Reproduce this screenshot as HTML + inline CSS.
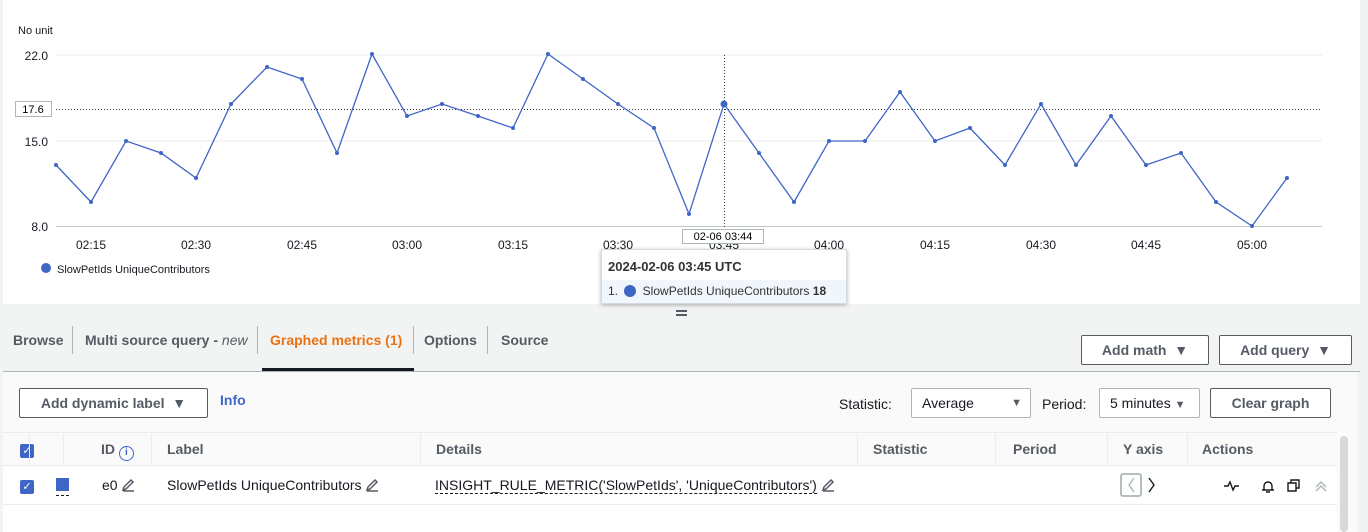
<!DOCTYPE html>
<html><head><meta charset="utf-8"><style>
*{box-sizing:border-box;margin:0;padding:0}
body{width:1368px;height:532px;overflow:hidden;background:#f2f3f3;font-family:"Liberation Sans",sans-serif;color:#16191f;position:relative}
.abs{position:absolute}
.chart{left:3px;top:0;width:1357px;height:304px;background:#fff}
.tab{position:absolute;top:332px;font-size:14px;font-weight:bold;color:#545b64}
.sep{position:absolute;top:326px;width:1px;height:28px;background:#aab7b8}
.btn{position:absolute;border:1px solid #545b64;border-radius:2px;background:#fff;font-size:14px;font-weight:bold;color:#545b64;text-align:center;line-height:28px;height:30px}
.sel{position:absolute;border:1px solid #aab7b8;border-radius:2px;background:#fff;font-size:14px;color:#16191f;height:30px;line-height:28px;padding-left:10px}
.th{position:absolute;top:441px;font-size:14px;font-weight:bold;color:#545b64}
.vl{position:absolute;top:434px;width:1px;height:30px;background:#eaeded}
.cb{position:absolute;width:14px;height:14px;background:#3f66c6;border-radius:2px;color:#fff;font-size:11px;line-height:14px;text-align:center}
.pen{display:inline-block;vertical-align:-2px}
</style></head><body>
<div class="abs chart"></div>
<svg class="abs" style="left:0;top:0" width="1368" height="305">
<text x="18" y="34" font-size="11" fill="#16191f" font-family="Liberation Sans">No unit</text>
<g font-size="12" fill="#16191f" font-family="Liberation Sans" text-anchor="end">
<text x="48" y="60">22.0</text><text x="48" y="146">15.0</text><text x="48" y="231">8.0</text></g>
<line x1="56" y1="55" x2="1322" y2="55" stroke="#e9ebed"/>
<line x1="56" y1="141" x2="1322" y2="141" stroke="#e9ebed"/>
<line x1="56" y1="226.5" x2="1322" y2="226.5" stroke="#c6c6cd"/>
<line x1="56" y1="109.5" x2="1322" y2="109.5" stroke="#333" stroke-dasharray="1,2"/>
<line x1="724.5" y1="55" x2="724.5" y2="232" stroke="#333" stroke-dasharray="1,2"/>
<rect x="15.5" y="101.5" width="36" height="15" fill="#fff" stroke="#aab7b8"/>
<text x="33" y="113" font-size="11" text-anchor="middle" font-family="Liberation Sans">17.6</text>
<g font-size="12" fill="#16191f" font-family="Liberation Sans" text-anchor="middle">
<text x="91" y="249">02:15</text><text x="196" y="249">02:30</text><text x="302" y="249">02:45</text><text x="407" y="249">03:00</text><text x="513" y="249">03:15</text><text x="618" y="249">03:30</text><text x="724" y="249">03:45</text><text x="829" y="249">04:00</text><text x="935" y="249">04:15</text><text x="1041" y="249">04:30</text><text x="1146" y="249">04:45</text><text x="1252" y="249">05:00</text></g>
<rect x="682.5" y="229.5" width="81" height="14" fill="#fff" stroke="#aab7b8"/>
<text x="723" y="240" font-size="11" text-anchor="middle" font-family="Liberation Sans">02-06 03:44</text>
<polyline fill="none" stroke="#3f66c6" stroke-width="1.3" points="56,165 91,202 126,141 161,153 196,178 231,104 267,67 302,79 337,153 372,54 407,116 442,104 478,116 513,128 548,54 583,79 618,104 654,128 689,214 724,104 759,153 794,202 829,141 865,141 900,92 935,141 970,128 1005,165 1041,104 1076,165 1111,116 1146,165 1181,153 1216,202 1252,226 1287,178"/>
<g fill="#3f66c6">
<circle cx="56" cy="165" r="2"/><circle cx="91" cy="202" r="2"/><circle cx="126" cy="141" r="2"/><circle cx="161" cy="153" r="2"/><circle cx="196" cy="178" r="2"/><circle cx="231" cy="104" r="2"/><circle cx="267" cy="67" r="2"/><circle cx="302" cy="79" r="2"/><circle cx="337" cy="153" r="2"/><circle cx="372" cy="54" r="2"/><circle cx="407" cy="116" r="2"/><circle cx="442" cy="104" r="2"/><circle cx="478" cy="116" r="2"/><circle cx="513" cy="128" r="2"/><circle cx="548" cy="54" r="2"/><circle cx="583" cy="79" r="2"/><circle cx="618" cy="104" r="2"/><circle cx="654" cy="128" r="2"/><circle cx="689" cy="214" r="2"/><circle cx="724" cy="104" r="3.5"/><circle cx="759" cy="153" r="2"/><circle cx="794" cy="202" r="2"/><circle cx="829" cy="141" r="2"/><circle cx="865" cy="141" r="2"/><circle cx="900" cy="92" r="2"/><circle cx="935" cy="141" r="2"/><circle cx="970" cy="128" r="2"/><circle cx="1005" cy="165" r="2"/><circle cx="1041" cy="104" r="2"/><circle cx="1076" cy="165" r="2"/><circle cx="1111" cy="116" r="2"/><circle cx="1146" cy="165" r="2"/><circle cx="1181" cy="153" r="2"/><circle cx="1216" cy="202" r="2"/><circle cx="1252" cy="226" r="2"/><circle cx="1287" cy="178" r="2"/>
<circle cx="46" cy="268" r="5"/></g>
<text x="57" y="273" font-size="11" fill="#16191f" font-family="Liberation Sans">SlowPetIds UniqueContributors</text>
</svg>
<div class="abs" style="left:601px;top:249px;width:246px;height:55px;background:#fff;border:1px solid #d5dbdb;box-shadow:0 1px 4px rgba(0,0,0,.3)">
<div style="position:absolute;left:6px;top:9px;font-size:13px;font-weight:bold;color:#333">2024-02-06 03:45 UTC</div>
<div style="position:absolute;left:0;top:30px;width:244px;height:23px;background:#f1f6fd;font-size:12px;color:#333;line-height:23px;padding-left:6px">1. <span style="display:inline-block;width:12px;height:12px;border-radius:50%;background:#3f66c6;vertical-align:-2px;margin:0 3px"></span> SlowPetIds UniqueContributors <b>18</b></div></div>
<div class="abs" style="left:676px;top:310px;width:11px;height:2px;background:#545b64"></div>
<div class="abs" style="left:676px;top:314px;width:11px;height:2px;background:#545b64"></div>
<div class="tab" style="left:13px">Browse</div><div class="sep" style="left:72px"></div>
<div class="tab" style="left:85px">Multi source query - <i style="font-weight:normal">new</i></div><div class="sep" style="left:257px"></div>
<div class="tab" style="left:270px;color:#ec7211">Graphed metrics (1)</div><div class="sep" style="left:413px"></div>
<div class="tab" style="left:424px">Options</div><div class="sep" style="left:487px"></div>
<div class="tab" style="left:501px">Source</div>
<div class="abs" style="left:262px;top:368px;width:152px;height:3px;background:#16191f"></div>
<div class="abs" style="left:3px;top:371px;width:1357px;height:1px;background:#aab7b8"></div>
<div class="btn" style="left:1081px;top:335px;width:128px">Add math&nbsp;&nbsp;▼</div>
<div class="btn" style="left:1219px;top:335px;width:133px">Add query&nbsp;&nbsp;▼</div>
<div class="abs" style="left:3px;top:372px;width:1355px;height:160px;background:#fafafa"></div>
<div class="btn" style="left:19px;top:388px;width:189px">Add dynamic label&nbsp;&nbsp;▼</div>
<div class="abs" style="left:220px;top:392px;font-size:14px;font-weight:bold;color:#3f66c6">Info</div>
<div class="abs" style="left:839px;top:396px;font-size:14px">Statistic:</div>
<div class="sel" style="left:911px;top:388px;width:120px">Average<span style="position:absolute;right:8px;font-size:11px;color:#545b64">▼</span></div>
<div class="abs" style="left:1042px;top:396px;font-size:14px">Period:</div>
<div class="sel" style="left:1099px;top:388px;width:101px">5 minutes <span style="font-size:11px;color:#545b64">▼</span></div>
<div class="btn" style="left:1210px;top:388px;width:121px">Clear graph</div>
<div class="abs" style="left:3px;top:432px;width:1334px;height:100px;background:#fff"></div>
<div class="abs" style="left:3px;top:432px;width:1334px;height:33px;background:#fafafa"></div>
<div class="abs" style="left:3px;top:432px;width:1334px;height:1px;background:#eaeded"></div>
<div class="abs" style="left:3px;top:465px;width:1334px;height:1px;background:#eaeded"></div>
<div class="abs" style="left:3px;top:504px;width:1334px;height:1px;background:#eaeded"></div>
<div class="cb" style="left:20px;top:444px">✓</div>
<div class="vl" style="left:29px"></div><div class="vl" style="left:63px"></div><div class="vl" style="left:151px"></div><div class="vl" style="left:420px"></div><div class="vl" style="left:857px"></div><div class="vl" style="left:995px"></div><div class="vl" style="left:1107px"></div><div class="vl" style="left:1187px"></div>
<div class="th" style="left:101px">ID <span style="display:inline-block;width:15px;height:15px;border:1.5px solid #3f66c6;border-radius:50%;color:#3f66c6;font-size:10px;line-height:12px;text-align:center;vertical-align:-1px">i</span></div>
<div class="th" style="left:167px">Label</div><div class="th" style="left:436px">Details</div><div class="th" style="left:873px">Statistic</div><div class="th" style="left:1013px">Period</div><div class="th" style="left:1123px">Y axis</div><div class="th" style="left:1202px">Actions</div>
<div class="abs" style="left:1340px;top:436px;width:8px;height:96px;background:#d5dbdb;border-radius:4px"></div>
<div class="cb" style="left:20px;top:480px">✓</div>
<div class="abs" style="left:56px;top:478px;width:13px;height:13px;background:#3f66c6"></div>
<div class="abs" style="left:56px;top:495px;width:13px;border-top:1px dashed #16191f"></div>
<div class="abs" style="left:102px;top:477px;font-size:14px">e0 <svg class="pen" width="14" height="14" fill="none" stroke="#545b64" stroke-width="1.5"><path d="M2 12l1-3 7-7 2 2-7 7zM2 13h11"/></svg></div>
<div class="abs" style="left:167px;top:477px;font-size:14px">SlowPetIds UniqueContributors <svg class="pen" width="14" height="14" fill="none" stroke="#545b64" stroke-width="1.5"><path d="M2 12l1-3 7-7 2 2-7 7zM2 13h11"/></svg></div>
<div class="abs" style="left:435px;top:477px;font-size:14px"><span style="border-bottom:1px dashed #16191f">INSIGHT_RULE_METRIC('SlowPetIds', 'UniqueContributors')</span> <svg class="pen" width="14" height="14" fill="none" stroke="#545b64" stroke-width="1.5"><path d="M2 12l1-3 7-7 2 2-7 7zM2 13h11"/></svg></div>
<svg class="abs" style="left:1120px;top:473px" width="45" height="26" fill="none" stroke-width="1.4">
<rect x="1" y="1" width="20" height="22" rx="2" stroke="#aab7b8" stroke-width="1.8"/>
<path d="M14 5l-5 7 5 7" stroke="#aab7b8"/>
<path d="M29 5l5 7-5 7" stroke="#16191f"/>
</svg>
<svg class="abs" style="left:1222px;top:477px" width="120" height="18" fill="none" stroke="#16191f" stroke-width="1.4">
<path d="M2 9h4l2-4 3 8 2-4h4"/>
<path d="M40 13h12M42 13v-4a4 4 0 0 1 8 0v4M44 15h4"/>
<path d="M66 6h8v8h-8zM69 6V3h8v8h-3"/>
<path d="M94 10l5-5 5 5M94 14l5-5 5 5" stroke="#aab7b8"/>
</svg>
</body></html>
